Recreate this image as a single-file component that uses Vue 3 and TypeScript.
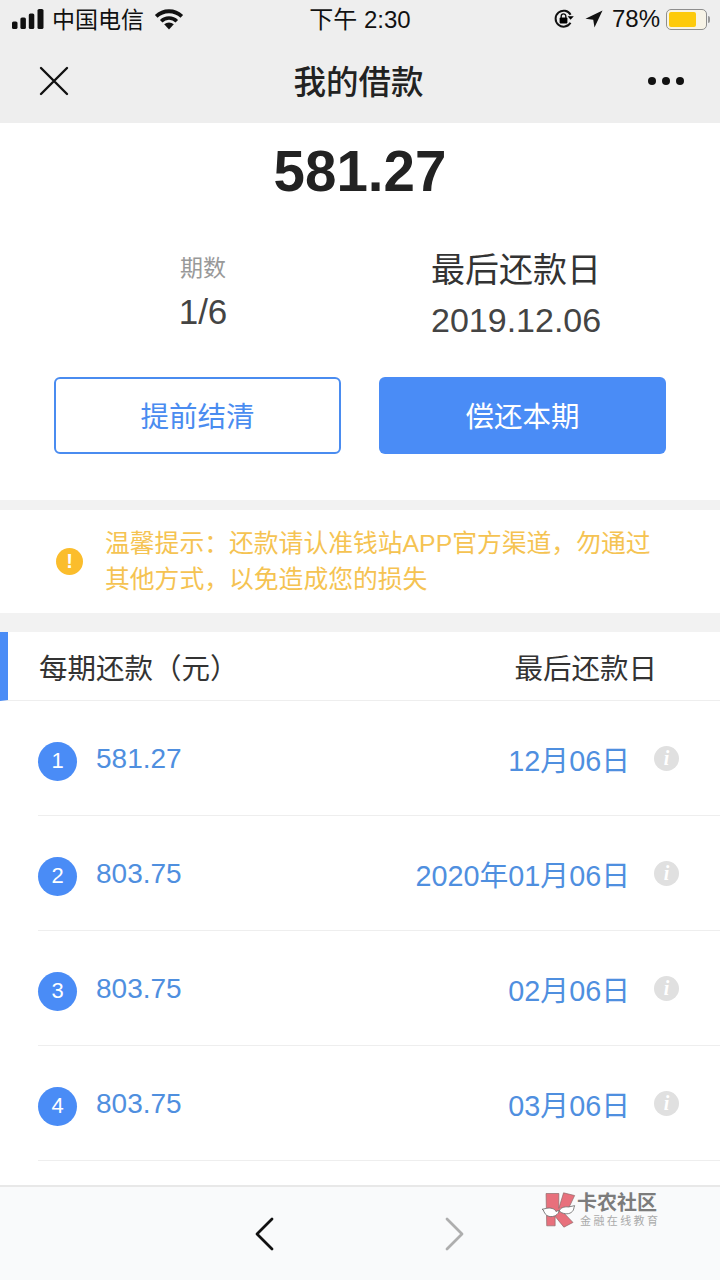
<script setup lang="ts">
const rows = [
  { no: 1, amount: '581.27', date: '12月06日' },
  { no: 2, amount: '803.75', date: '2020年01月06日' },
  { no: 3, amount: '803.75', date: '02月06日' },
  { no: 4, amount: '803.75', date: '03月06日' },
]
</script>

<template>
  <div class="page">
    <header class="top">
      <div class="status">
        <div class="status-left">
          <svg class="signal" width="32" height="20" viewBox="0 0 32 20">
            <rect x="0" y="12.5" width="5.5" height="7.5" rx="1.6" />
            <rect x="8.4" y="8.5" width="5.5" height="11.5" rx="1.6" />
            <rect x="16.8" y="4.5" width="5.5" height="15.5" rx="1.6" />
            <rect x="25.5" y="0" width="6" height="20" rx="1.6" />
          </svg>
          <span class="carrier">中国电信</span>
          <svg class="wifi" width="30" height="22" viewBox="0 0 30 22">
            <path d="M15 21.5l-4.8-5.2a7 7 0 0 1 9.6 0z" />
            <path d="M2.2 8.4a18.5 18.5 0 0 1 25.6 0" fill="none" stroke="#111" stroke-width="3.8" />
            <path d="M7.2 13.2a11 11 0 0 1 15.6 0" fill="none" stroke="#111" stroke-width="3.6" />
          </svg>
        </div>
        <span class="clock">下午 2:30</span>
        <div class="status-right">
          <svg class="lock" width="22" height="22" viewBox="0 0 22 22">
            <path d="M17.5 14.8A8 8 0 1 1 17.6 6.8" fill="none" stroke="#111" stroke-width="2" />
            <path d="M14.6 7.8h6.2l-3-3.6z" transform="rotate(180 17.7 8)" />
            <rect x="6.6" y="9.6" width="7.8" height="6" rx="1" />
            <path d="M8.2 10V8.2a2.3 2.3 0 0 1 4.6 0V10" fill="none" stroke="#111" stroke-width="1.4" />
          </svg>
          <svg class="arrow" width="18" height="18" viewBox="0 0 19 19">
            <path d="M18.5 0.5L0.5 9.2 8.7 10.4 10 18.5z" />
          </svg>
          <span class="percent">78%</span>
          <div class="battery">
            <div class="battery-body"><div class="battery-fill" /></div>
            <div class="battery-cap" />
          </div>
        </div>
      </div>
      <div class="nav">
        <svg class="close" width="30" height="30" viewBox="0 0 30 30">
          <path d="M2 2l26 26M28 2L2 28" fill="none" stroke="#111" stroke-width="2.4" stroke-linecap="round" />
        </svg>
        <span class="title">我的借款</span>
        <div class="more"><i /><i /><i /></div>
      </div>
    </header>

    <section class="summary">
      <div class="amount">581.27</div>
      <div class="info">
        <div class="info-left">
          <div class="info-label">期数</div>
          <div class="info-value">1/6</div>
        </div>
        <div class="info-right">
          <div class="info-head">最后还款日</div>
          <div class="info-date">2019.12.06</div>
        </div>
      </div>
      <div class="actions">
        <button class="btn btn-line">提前结清</button>
        <button class="btn btn-fill">偿还本期</button>
      </div>
    </section>

    <section class="notice">
      <span class="notice-icon">!</span>
      <p>温馨提示：还款请认准钱站APP官方渠道，勿通过<br />其他方式，以免造成您的损失</p>
    </section>

    <section class="plan">
      <div class="plan-head">
        <span>每期还款（元）</span>
        <span>最后还款日</span>
      </div>
      <div v-for="row in rows" :key="row.no" class="row">
        <span class="row-no">{{ row.no }}</span>
        <span class="row-amount">{{ row.amount }}</span>
        <span class="row-date">{{ row.date }}</span>
        <span class="row-info">i</span>
      </div>
    </section>

    <footer class="bottom">
      <svg width="20" height="34" viewBox="0 0 20 34">
        <path d="M17 2L2 17l15 15" fill="none" stroke="#111" stroke-width="2.8" stroke-linecap="round" stroke-linejoin="round" />
      </svg>
      <svg width="20" height="34" viewBox="0 0 20 34">
        <path d="M2 2l15 15L2 32" fill="none" stroke="#aeaeae" stroke-width="2.8" stroke-linecap="round" stroke-linejoin="round" />
      </svg>
      <div class="mark">
        <svg width="35" height="36" viewBox="180 128 104 106">
          <path d="M195 132h38v44l14-46 33 8-18 38-14 14 27 28-27 14-26-32v28h-25z" fill="#e8707c" stroke="#8a6a6a" stroke-width="2" />
          <path d="M183 179l14-3c10-2 24 0 28 10 2-3 6-3 9-2 2-8 14-14 28-12l18-4-2 6c-1 12-12 20-26 18-7-1-15-4-18-9-2 12-16 20-30 17-10-2-15-12-17-19z" fill="#fff" stroke="#666" stroke-width="2.4" />
        </svg>
        <div class="mark-text">
          <span class="mark-name">卡农社区</span>
          <span class="mark-sub">金融在线教育</span>
        </div>
      </div>
    </footer>
  </div>
</template>

<style scoped>
.page {
  position: relative;
  display: flex;
  flex-direction: column;
  width: 720px;
  height: 1280px;
  overflow: hidden;
  background: #fff;
  color: #333;
  font-family: "Liberation Sans", "Noto Sans CJK SC", sans-serif;
}
.top { height: 123px; background: #eee; color: #111; flex: none; }
.status {
  display: flex;
  align-items: center;
  height: 38px;
  padding: 0 10px 0 12px;
  font-size: 23px;
}
.status-left, .status-right { display: flex; align-items: center; flex: 1; }
.status-right { justify-content: flex-end; }
.signal { margin-right: 8px; fill: #111; }
.carrier { margin-bottom: 3px; }
.wifi { margin-left: 10px; fill: #111; }
.clock { font-size: 24px; margin: 0 2px 3px 0; }
.arrow { margin-left: 10px; fill: #111; }
.percent { margin-left: 9px; font-size: 24px; }
.battery { display: flex; align-items: center; margin-left: 6px; }
.battery-body {
  width: 41px;
  height: 21px;
  padding: 2px;
  border: 1.5px solid #8e8e8e;
  border-radius: 5px;
  box-sizing: border-box;
  background: #f7f3e6;
}
.battery-fill { width: 27px; height: 100%; background: #fdca0b; border-radius: 2px; }
.battery-cap { width: 2px; height: 7px; margin-left: 1px; background: #999; border-radius: 0 2px 2px 0; }
.nav {
  display: flex;
  align-items: center;
  justify-content: space-between;
  height: 85px;
  padding: 0 36px 0 39px;
}
.title { font-size: 32.5px; font-weight: 500; color: #222; margin-bottom: 3px; }
.more { display: flex; gap: 6px; }
.more i { width: 8px; height: 8px; border-radius: 50%; background: #111; }

.summary { flex: none; height: 377px; box-sizing: border-box; }
.amount {
  margin-top: 15px;
  height: 68px;
  line-height: 68px;
  text-align: center;
  font-size: 56.5px;
  font-weight: 700;
  color: #222;
}
.info { display: flex; margin-top: 42px; height: 126px; }
.info-left { width: 406px; text-align: center; }
.info-label { color: #999; font-size: 23px; line-height: 34px; margin-top: 3px; }
.info-value { font-size: 35px; line-height: 44px; margin-top: 5px; color: #444; }
.info-right { margin-left: 25px; }
.info-head { font-size: 34px; line-height: 44px; color: #333; }
.info-date { font-size: 34px; line-height: 44px; margin-top: 6px; color: #444; }
.actions { display: flex; justify-content: space-between; padding: 0 54px; margin-top: 3px; }
.btn {
  width: 287px;
  height: 77px;
  padding: 0 0 2px;
  border-radius: 6px;
  font-family: inherit;
  font-size: 28.5px;
  box-sizing: border-box;
}
.btn-line { background: #fff; border: 2px solid #4a8cf0; color: #4a8cf0; }
.btn-fill { background: #4a8cf6; border: 0; color: #fff; }

.notice {
  flex: none;
  display: flex;
  align-items: center;
  height: 103px;
  border-top: 10px solid #f2f2f2;
  border-bottom: 19px solid #f2f2f2;
  padding-left: 56px;
}
.notice-icon {
  display: flex;
  align-items: center;
  justify-content: center;
  width: 27px;
  height: 27px;
  border-radius: 50%;
  background: #fbbd2c;
  color: #fff;
  font-size: 20px;
  font-weight: 700;
}
.notice p {
  margin: 0 0 0 22px;
  font-size: 24.8px;
  line-height: 36px;
  color: #f5c352;
  white-space: nowrap;
}

.plan { flex: 1; min-height: 0; }
.plan-head {
  display: flex;
  justify-content: space-between;
  align-items: center;
  height: 68px;
  padding: 0 63px 0 31px;
  border-left: 8px solid #4a8cf6;
  border-bottom: 1px solid #eee;
  font-size: 28.5px;
  color: #333;
  text-spacing-trim: space-all;
}
.row {
  display: flex;
  align-items: center;
  height: 114px;
  margin-left: 38px;
  padding-right: 41px;
  border-bottom: 1px solid #eee;
  color: #4f8fdf;
  font-size: 28px;
}
.row-no {
  display: flex;
  align-items: center;
  justify-content: center;
  width: 39px;
  height: 39px;
  border-radius: 50%;
  background: #4a8cf6;
  color: #fff;
  font-size: 22px;
  margin-top: 6px;
}
.row-amount { margin-left: 19px; margin-top: 2px; }
.row-date { margin-left: auto; font-size: 28.8px; }
.row-info {
  display: flex;
  align-items: center;
  justify-content: center;
  width: 25px;
  height: 25px;
  margin-left: 24px;
  border-radius: 50%;
  background: #e0e0e0;
  color: #fff;
  font-size: 20px;
  font-weight: 700;
  font-style: italic;
  font-family: "Liberation Serif", serif;
}

.bottom {
  flex: none;
  display: flex;
  align-items: center;
  height: 95px;
  padding: 0 0 0 255px;
  gap: 170px;
  box-sizing: border-box;
  background: #f9fafb;
  border-top: 2px solid #e8e8e8;
}
.mark {
  position: absolute;
  left: 541px;
  top: 1192px;
  display: flex;
  align-items: center;
  gap: 1px;
}
.mark-text { display: flex; flex-direction: column; }
.mark-name { font-size: 20px; line-height: 22px; font-weight: 700; color: #7c7c7c; }
.mark-sub { font-size: 11px; line-height: 14px; margin-left: 3px; color: #aaa; letter-spacing: 2.4px; }
</style>
